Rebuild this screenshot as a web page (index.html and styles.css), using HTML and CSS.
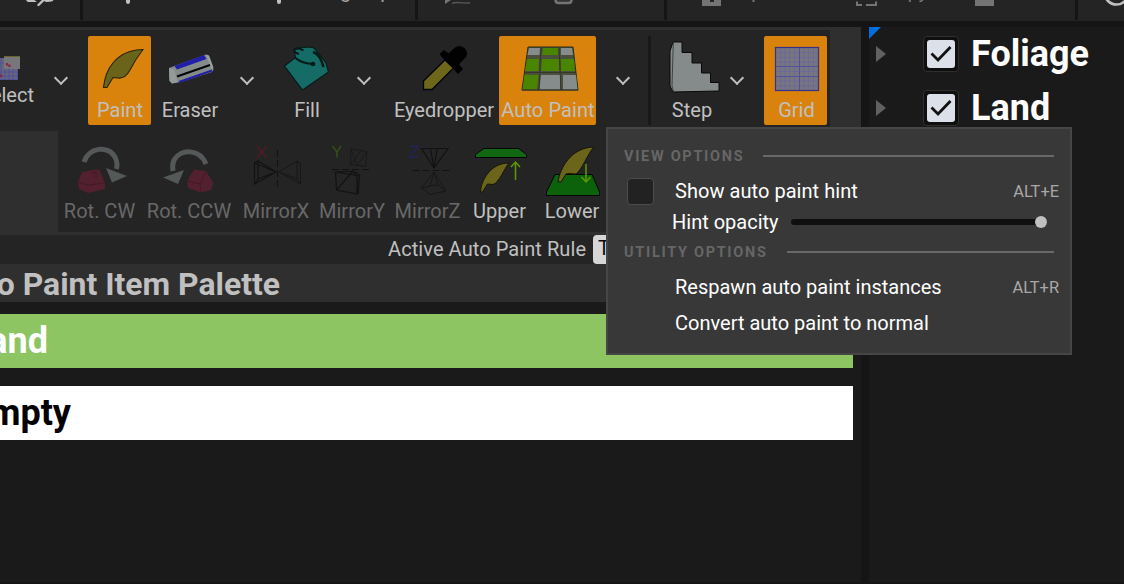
FILE: index.html
```html
<!DOCTYPE html>
<html lang="en">
<head>
<meta charset="utf-8">
<title>Tile Editor</title>
<link rel="stylesheet" href="styles.css">
</head>
<body>
<div class="app">
  <header class="topbar">
    <section class="top-group g1"><svg width="80" height="20" viewBox="0 0 80 20"><path d="M26 -1h7l4 3H28q-2-1-2-3z" fill="#c0c0c0"/><path d="M38.500 5l6-6M45 0q1 1.500 7 0" fill="none" stroke="#c0c0c0" stroke-width="2.400" stroke-linecap="round"/></svg></section>
    <section class="top-group g2"><svg width="332" height="20" viewBox="83 0 332 20"><path d="M128 -2V2M279 -2V2" stroke="#c0c0c0" stroke-width="4" stroke-linecap="round"/><text x="340" y="-2" class="top-text">group</text></svg></section>
    <section class="top-group g3"><svg width="246" height="20" viewBox="418 0 246 20"><path d="M445 0h6l-6 4z" fill="#747474"/><path d="M452 3.500q3-1.500 9-.7l9 .2" fill="none" stroke="#565656" stroke-width="1.600"/><path d="M555.500 -3V0q0 3 3 3h10q3 0 3-3V-3" fill="#333" stroke="#747474" stroke-width="2.500"/></svg></section>
    <section class="top-group g4"><svg width="408" height="20" viewBox="667 0 408 20"><path d="M702 -4h19V6h-19z" fill="#747474"/><rect x="710" y="-1" width="4" height="3" fill="#242424"/><path d="M753.500 -3V2" stroke="#747474" stroke-width="2"/><path d="M857 1.500V5h5M866 5h6M872 5h4V1.500" fill="none" stroke="#747474" stroke-width="2"/><text x="883" y="-2" class="top-text">Copy</text><path d="M975 -4h19V6h-19z" fill="#747474"/></svg></section>
    <section class="top-group g5"><svg width="46" height="20" viewBox="1078 0 46 20"><circle cx="1116.500" cy="-7.500" r="12" fill="none" stroke="#c0c0c0" stroke-width="2.600"/></svg></section>
  </header>
  <div class="workspace">
    <main class="editor">
      <div class="toolbars">
        <div class="toolbar primary">
          <button class="tool select"><svg width="63" height="60" viewBox="-25 36 63 60"><path d="M-10 58h28v22h-28z" fill="#66677c"/><path d="M1 58V80M5 58V80M9 58V80M13 58V80M17.500 58V80M-5 63H18M-5 72H18M-5 76H18M-5 79.500H18" stroke="#4d4b9e" stroke-width=".8"/><path d="M4 56.500H20V69H4z" fill="#77767a"/><path d="M4 56.500H20" stroke="#6c6427"/><path d="M6 63h2v1.500h2.500v2.500H8.500V65.500H6zM-1 73h1.500v2h2v2H0" fill="#8c2244"/></svg><span>Select</span></button>
          <i class="chevron c1"></i>
          <button class="tool paint active"><svg width="63" height="60" viewBox="88 36 63 60"><path d="M103.500 87.500C105 71 115 50 143 49.500C138 56 132 66 130 70Q125 79 118 78L113 77.500L107 87.500z" fill="#6a641b" stroke="#272508" stroke-width="1.100"/></svg><span>Paint</span></button>
          <button class="tool eraser"><svg width="70" height="60" viewBox="155 36 70 60"><path d="M169 68L206 54.500L209 56L213.500 69.500L212 72L181 82L172 83.500L169.500 81z" fill="#848b8b"/><path d="M174.500 66L204 55L206.500 59L177 69.500z" fill="#211eaa"/><path d="M206 54.500l3 1 4.500 12-2 2z" fill="#9a9fa0"/><path d="M179 82L212 70.500" stroke="#211eaa" stroke-width="2"/><path d="M177 76.500L210 65" stroke="#050505" stroke-width="2"/><path d="M169 68l5.500 2 3 12-5.500 1.500-2.500-3z" fill="#959b9b"/></svg><span>Eraser</span></button>
          <i class="chevron c2"></i>
          <button class="tool fill"><svg width="76" height="60" viewBox="269 36 76 60"><path d="M284.500 66L295.500 57.500L294 50L298 48L309 47L314 48L319 54L326 63L328.500 72L302.500 90z" fill="#156c66" stroke="#061d1b" stroke-width="1.200"/><path d="M303.500 50.500C295 45 290.500 52 299 54M295.500 58Q301 63 312 64" fill="none" stroke="#061a18" stroke-width="2"/><circle cx="313" cy="64" r="2.300" fill="#061a18"/><path d="M313 52Q320 54 323.500 67" fill="none" stroke="#061a18" stroke-width="2.500"/></svg><span>Fill</span></button>
          <i class="chevron c3"></i>
          <button class="tool dropper"><svg width="107" height="60" viewBox="390 36 107 60"><path d="M445 60L453.500 68L432 89.500H423.500V81z" fill="#6e671b" stroke="#050505" stroke-width="1.300"/><path d="M439.500 54L444 50L448.500 53.500L455 47.500Q460 44 465 48.500Q469 54 465 58L459 64.500L463 69L458 74L453 68.500L444 59.500z" fill="#020202"/></svg><span>Eyedropper</span></button>
          <button class="tool auto active"><svg width="97" height="60" viewBox="499 36 97 60"><path d="M528 47H573L578 90H522z" fill="#4b4f3c" stroke="#292e16"/><path d="M529 48H540L539.500 55H527.500zM561 48H572L573 55H561zM541 75H560V89.500H539.500zM563 75H576L577.500 89.500H563z" fill="#858c8b"/><path d="M543 48H558V55H542zM527 59H539L538.500 71H525zM542 59H559V71H541zM561 59H574L575 71H561zM524.500 75H538.500L537 89.500H522.500z" fill="#4a8500"/><path d="M525 72.500H576M522 90H578M541 47l-2 43M559 47l2 43" fill="none" stroke="#34362c" stroke-width="1"/></svg><span>Auto Paint</span></button>
          <i class="chevron c4"></i>
          <i class="rule"></i>
          <button class="tool step"><svg width="70" height="60" viewBox="657 36 70 60"><path d="M673 42H682V52.500H692V63H701.500V73H710.500V82.500H719V91L673 92L670 86V51z" fill="#848b8a" stroke="#080808" stroke-width="1"/><path d="M673.300 43L672 86L673.500 91.500" fill="none" stroke="#2c2e2e" stroke-width=".8"/></svg><span>Step</span></button>
          <i class="chevron c5"></i>
          <button class="tool grid active"><svg width="63" height="60" viewBox="764 36 63 60"><rect x="775.500" y="47.500" width="43" height="43" fill="#77767e" stroke="#38318b" stroke-width="1.200"/><path d="M780.500 48V90M785 48V90M789.500 48V90M794.500 48V90M804 48V90M808.500 48V90M813.500 48V90M776 52.500H818M776 57.500H818M776 62H818M776 71.500H818M776 81H818M776 86H818" stroke="#6765a0" stroke-width=".7"/><path d="M799.500 48V90M776 66.500H818M776 76.500H818" stroke="#504d9e" stroke-width=".9"/></svg><span>Grid</span></button>
        </div>
        <div class="toolbar secondary">
          <button class="tool rcw off"><svg width="83" height="60" viewBox="58 137 83 60"><path d="M84 162C89 147 108 145 115 157Q118 163 116.500 169" fill="none" stroke="#545858" stroke-width="5"/><path d="M106 168L127 176L112 182.500z" fill="#545858"/><path d="M78 182L82 172L99 169L105 183V189L88 193L79 189z" fill="#52202e"/><path d="M78 182L88 185L105 183M91 173l5-1v6" fill="none" stroke="#3c1922" stroke-width=".8"/></svg><span>Rot. CW</span></button>
          <button class="tool rccw off"><svg width="96" height="60" viewBox="141 137 96 60"><path d="M206 164C200 149 181 148 174 160Q172 165 173 171" fill="none" stroke="#545858" stroke-width="5"/><path d="M163 177.500L184 170L178 184z" fill="#545858"/><path d="M187 181L194 169.500L206 171L213.500 183L211 190L201 192.500L188 188z" fill="#52202e"/><path d="M187 181L200 184L206 171M200 184l1 8" fill="none" stroke="#3c1922" stroke-width=".8"/></svg><span>Rot. CCW</span></button>
          <button class="tool mx off"><svg width="78" height="60" viewBox="237 137 78 60"><path d="M257 146l10 12M267 146l-10 12" stroke="#521b28" stroke-width="1.500"/><g fill="none" stroke="#121212" stroke-width="1.100"><path d="M277.500 150V189" stroke-dasharray="7 3"/><path d="M254.500 163L258 161L276 172L254.500 184zM258 161V179L276 172M254.500 163L276 172M254.500 184L258 179"/><path d="M300.500 163L297 161L279 172L300.500 184zM297 161V179L279 172M300.500 184L297 179" stroke="#171717" stroke-width="1"/></g></svg><span>MirrorX</span></button>
          <button class="tool my off"><svg width="74" height="60" viewBox="315 137 74 60"><path d="M332.500 146l4.500 6 4-6M337 152v5.500" fill="none" stroke="#34501a" stroke-width="1.500"/><g fill="none" stroke="#121212" stroke-width="1.200"><path d="M332 169.500H372" stroke-dasharray="7 3"/><path d="M335.500 172L357 175.500V194L336.500 190zM335.500 172L353 171L359.500 175L358 194M357 175.500L359.500 175M336.500 190L353 171L357 176"/><path d="M351 149L367 151.500L365.500 166.500L350.500 164.500zM351 149L357 165.500L367 151.500M350.500 164.500L361 151" stroke="#171717" stroke-width=".9"/></g></svg><span>MirrorY</span></button>
          <button class="tool mz off"><svg width="77" height="60" viewBox="389 137 77 60"><path d="M410 146.500H418L410 157H418.500" fill="none" stroke="#232357" stroke-width="1.500"/><g fill="none" stroke="#121212" stroke-width="1.200"><path d="M412.500 170.500H452" stroke-dasharray="7 3"/><path d="M421.500 148.500H448L434 168zM434 168L430.500 149M434 168L437 149"/><path d="M434 172L421.500 188L430 194.500L446 191zM434 172L430 186L421.500 188M434 172L438 185L446 191M430 186L438 185" stroke="#171717" stroke-width="1"/></g></svg><span>MirrorZ</span></button>
          <button class="tool upper"><svg width="67" height="60" viewBox="466 137 67 60"><path d="M475.500 154.500L484 148.500H518.500L526.500 154.500V157.500H475.500z" fill="#126713" stroke="#050505"/><path d="M480.500 192C481 181 490 163 509 163C504 169 499 183 493 184.500L487.500 184L482.500 192z" fill="#6b651b" stroke="#161505"/><path d="M515.500 180V162M511 167L515.500 162L520 167" fill="none" stroke="#609904" stroke-width="1.500"/></svg><span>Upper</span></button>
          <button class="tool lower"><svg width="77" height="60" viewBox="533 137 77 60"><path d="M555 174.500H592L599.500 192V195.500H546.500V192z" fill="#0c610b" stroke="#050505"/><path d="M558 182C560 168 571 147.500 594 147C588 153 582 170 576 174L569 173.500L566 174L561 182z" fill="#6b651b" stroke="#161505"/><path d="M586 164V182M581.500 177L586 182L590.500 177" fill="none" stroke="#609904" stroke-width="1.500"/></svg><span>Lower</span></button>
        </div>
      </div>
      <div class="active-rule"><span class="rule-label">Active Auto Paint Rule</span><span class="rule-value">T</span></div>
      <h2 class="palette-title"><span>Auto Paint Item Palette</span></h2>
      <div class="palette">
        <div class="palette-item land"><span>Land</span></div>
        <div class="palette-item empty"><span>Empty</span></div>
      </div>
    </main>
    <aside class="layers">
      <div class="corner"></div>
      <div class="layer"><i class="expander"></i><span class="check"><svg width="28" height="28" viewBox="0 0 28 28"><path d="M4.500 13.500L11 20L23.500 7" fill="none" stroke="#121212" stroke-width="2.800"/></svg></span><span>Foliage</span></div>
      <div class="layer"><i class="expander"></i><span class="check"><svg width="28" height="28" viewBox="0 0 28 28"><path d="M4.500 13.500L11 20L23.500 7" fill="none" stroke="#121212" stroke-width="2.800"/></svg></span><span>Land</span></div>
    </aside>
  </div>
  <div class="menu">
    <div class="menu-head view"><span>VIEW OPTIONS</span><i></i></div>
    <div class="menu-row show"><b class="box"></b><span class="menu-label hint">Show auto paint hint</span><kbd>ALT+E</kbd></div>
    <div class="menu-row opacity"><span class="menu-label">Hint opacity</span><div class="slider"><i></i></div></div>
    <div class="menu-head util"><span>UTILITY OPTIONS</span><i></i></div>
    <div class="menu-row item"><span class="menu-label">Respawn auto paint instances</span><kbd>ALT+R</kbd></div>
    <div class="menu-row item"><span class="menu-label">Convert auto paint to normal</span></div>
  </div>
</div>
</body>
</html>
```

FILE: styles.css
```css
* { box-sizing: border-box; }
body { margin: 0; background: #151515; font: 20px/24px Roboto, sans-serif; color: #c0c0c0; }
.app { position: relative; width: 1124px; height: 584px; overflow: hidden; display: flex; flex-direction: column; border-bottom: 2px solid #161315; }
.topbar { display: flex; gap: 3px; height: 21px; flex: none; background: linear-gradient(#151515, #151515) 0 0 / 100% 20px no-repeat #242424; margin-bottom: 6px; }
.top-group { height: 20px; background: #242424; overflow: hidden; }
.top-group svg, .tool svg { display: block; }
.g1 { width: 80px; }
.g2 { width: 332px; }
.g3 { width: 246px; }
.g4 { width: 408px; }
.g5 { width: 46px; }
.top-text { font: 20px Roboto, sans-serif; fill: #a0a0a0; }
.g4 .top-text { fill: #747474; }

.workspace { display: flex; flex: 1; gap: 8px; }
.editor { width: 861px; background: #1a1a1a; overflow: hidden; }
.toolbars { background: #2f2f2f; padding: 3px 0; }
.toolbar { display: flex; height: 101px; background: #242424; overflow: hidden; padding-top: 6px; }
.primary { width: 830px; }
.secondary { margin-left: 58px; width: 772px; }
.tool { appearance: none; border: 0; margin: 0; padding: 0; background: none; color: inherit; font: inherit; height: 89px; flex: none; display: flex; flex-direction: column; align-items: center; border-radius: 2px; white-space: nowrap; }
.tool span { margin-top: 2px; }
.tool.active { background: #d9820c; }
.tool.active span, .dropper span, .lower span { padding-left: 1px; }
.off { color: #686868; }
.select { width: 63px; margin-left: -25px; }
.select span { margin-top: -13px; }
.paint { width: 63px; margin-left: 4px; }
.eraser { width: 70px; margin-left: 4px; }
.fill { width: 76px; }
.dropper { width: 107px; margin-left: 7px; }
.auto { width: 97px; margin-left: 2px; }
.auto span { letter-spacing: .1px; }
.step { width: 70px; margin-left: 6px; }
.grid { width: 63px; margin-left: 17px; }
.tool.grid span { padding-left: 2px; }
.rcw { width: 83px; }
.rccw { width: 96px; }
.mx { width: 78px; }
.my { width: 74px; }
.mz { width: 77px; }
.upper { width: 67px; }
.lower { width: 77px; }
.rule { width: 3px; height: 89px; background: #181818; flex: none; }
.chevron { height: 89px; flex: none; display: flex; justify-content: center; align-items: center; padding-right: 1px; }
.chevron::before { content: ""; width: 8px; height: 8px; border: solid #c0c0c0; border-width: 0 2px 2px 0; transform: translateY(-3px) rotate(45deg); }
.c1 { width: 46px; }
.c2 { width: 44px; }
.c3 { width: 38px; }
.c4 { width: 50px; margin-left: 2px; }
.c5 { width: 20px; }

.active-rule { height: 29px; background: #242424; display: flex; align-items: center; padding-left: 388px; }
.rule-label { width: 205px; white-space: nowrap; letter-spacing: .08px; padding-bottom: 2px; }
.rule-value { width: 240px; height: 29px; line-height: 27px; padding-left: 5px; border-radius: 4px; background: #d6d6d6; color: #0a0a0a; }
.palette-title { margin: 0; height: 38px; background: #2f2f2f; font-size: 31.9px; line-height: 38px; font-weight: 700; }
.palette-title span { display: flex; justify-content: flex-end; width: 280px; padding-top: 1px; white-space: nowrap; }
.palette { display: flex; flex-direction: column; gap: 18px; padding-top: 12px; }
.palette-item { width: 853px; height: 54px; font-size: 36px; line-height: 54px; font-weight: 700; }
.palette-item span { display: flex; justify-content: flex-end; padding-top: 1px; line-height: 53px; }
.land { background: #8cc562; color: #fff; }
.land span { width: 48px; }
.empty { background: #fff; color: #000; }
.empty span { width: 71px; }

.layers { position: relative; width: 255px; background: #1a1a1a; }
.corner { position: absolute; left: 0; top: 0; border-top: 12px solid #0070e0; border-right: 12px solid transparent; }
.layer { display: flex; align-items: center; height: 54px; padding-left: 7px; color: #fff; font-size: 36px; line-height: 54px; font-weight: 700; }
.expander { border: solid transparent; border-width: 8px 0 8px 10px; border-left-color: #616161; margin-right: 37px; }
.check { width: 36px; height: 36px; border: 1px solid #2f2f2f; border-radius: 4px; background: #0f0f0f; display: flex; align-items: center; justify-content: center; margin-right: 12px; }
.check svg { background: #dce0e8; border-radius: 3px; }

.menu { position: absolute; left: 606px; top: 127px; width: 466px; height: 228px; border: 2px solid #464646; background: #383838; padding: 16px 11px 0 16px; color: #fff; }
.menu-head { display: flex; align-items: center; height: 22px; padding-right: 5px; font-size: 14.5px; font-weight: 700; letter-spacing: 1.7px; color: #666; white-space: nowrap; }
.menu-head i { flex: 1; height: 2px; background: #696969; }
.menu-head span { width: 139px; padding-top: 2px; }
.menu-head.util span { width: 163px; }
.menu-head.util { margin-top: 7px; margin-bottom: 6px; }
.menu-row { display: flex; align-items: center; white-space: nowrap; }
.show { height: 38px; margin-top: 5px; padding-left: 3px; }
.show .menu-label { letter-spacing: .05px; }
.box { width: 27px; height: 27px; border: 1px solid #4c4c4c; border-radius: 4px; background: #222; margin-right: 21px; }
.opacity { height: 24px; padding-left: 48px; }
.opacity .menu-label { width: 119px; }
.slider { width: 256px; height: 6px; border-radius: 3px; background: #0f0f0f; display: flex; justify-content: flex-end; align-items: center; }
.slider i { width: 12px; height: 12px; border-radius: 50%; background: #c0c0c0; flex: none; }
.item { height: 36px; padding-left: 51px; }
kbd { margin-left: auto; font: 16.4px/20px Roboto, sans-serif; color: #a8a8a8; padding-top: 1px; }
```
